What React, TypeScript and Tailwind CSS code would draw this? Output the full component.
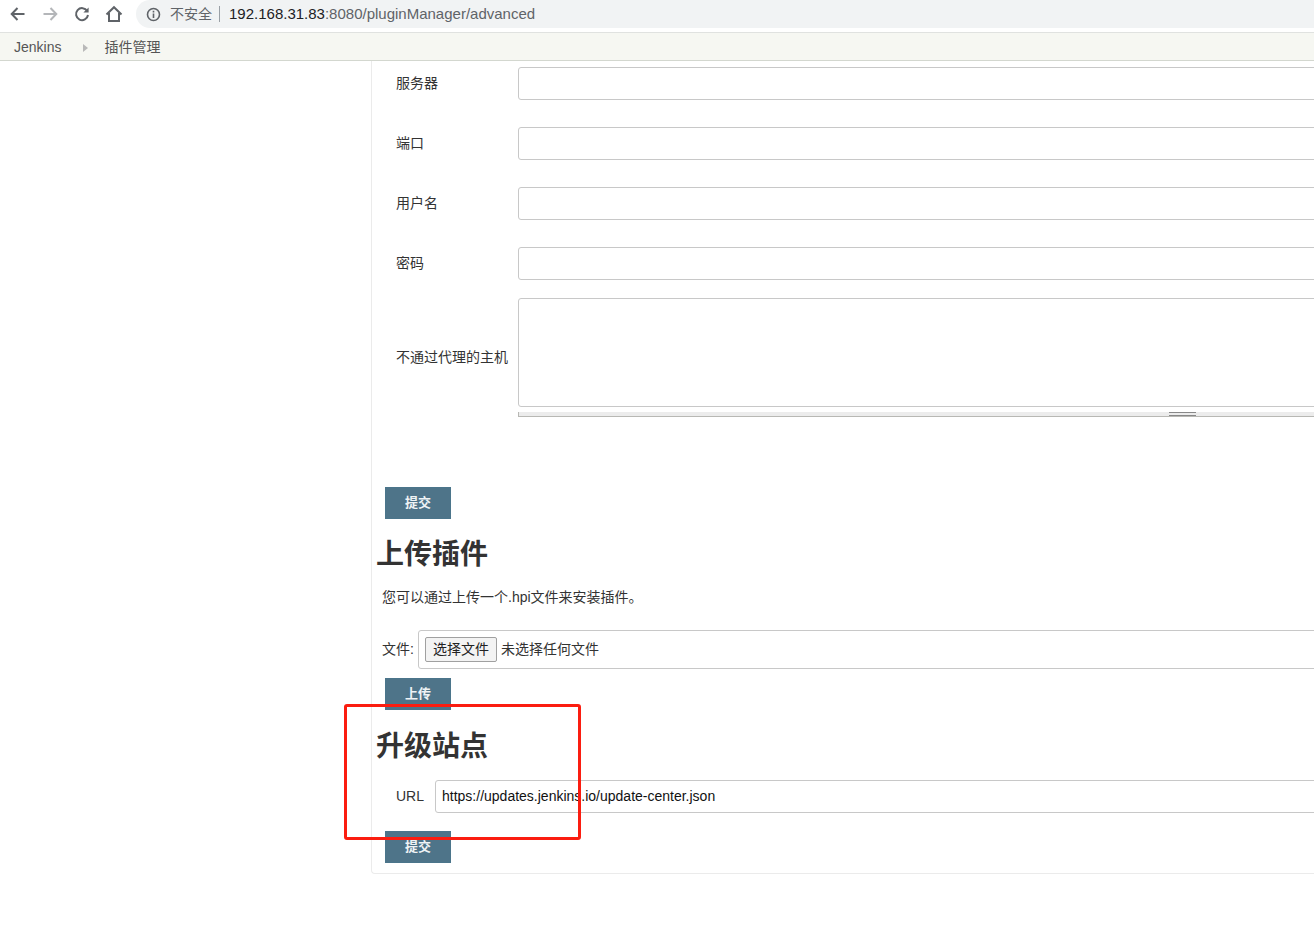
const CJK = "font-['Liberation_Sans','Noto_Sans_CJK_SC',sans-serif]";

const FIELDS = ["服务器", "端口", "用户名", "密码"];

function SubmitButton({ label }: { label: string }) {
  return (
    <button className="flex h-[32px] w-[66px] items-center justify-center border border-[#4b758b] bg-[#4e7489] text-[13px] font-bold text-[#eef3f5]">
      {label}
    </button>
  );
}

function ToolbarIcons() {
  return (
    <div className="flex items-center">
      <svg className="ml-[9px]" width="18" height="18" viewBox="0 0 18 18" fill="none" stroke="#5f6368" strokeWidth="2">
        <path d="M15.5 9H3M8.5 3 2.7 9l5.8 6" />
      </svg>
      <svg className="ml-[14px]" width="18" height="18" viewBox="0 0 18 18" fill="none" stroke="#b4b6b9" strokeWidth="2">
        <path d="M2.5 9H15M9.5 3l5.8 6-5.800 6" />
      </svg>
      <svg className="ml-[14px]" width="18" height="18" viewBox="0 0 18 18" fill="none">
        <path d="M14.2 6A6 6 0 1 0 15 10" stroke="#5f6368" strokeWidth="2" />
        <path d="M15.6 2.4V7.6H10.4Z" fill="#5f6368" />
      </svg>
      <svg className="ml-[14px]" width="18" height="18" viewBox="0 0 18 18" fill="none" stroke="#5f6368" strokeWidth="2">
        <path d="M1.5 9.5 9 2.2l7.500 7.300M4 8v8h10V8" />
      </svg>
    </div>
  );
}

export default function App() {
  return (
    <div className={`relative h-[941px] w-[1314px] overflow-hidden bg-white ${CJK}`}>
      <div className="flex h-[33px] items-start border-b border-[#e0e2e0] bg-white">
        <div className="flex h-[28px] items-center">
          <ToolbarIcons />
        </div>
        <div className="ml-[13px] flex h-[28px] flex-1 items-center rounded-l-[14px] bg-[#f1f3f4] pl-[10px]">
          <svg width="15" height="15" viewBox="0 0 15 15" fill="none" stroke="#5f6368" strokeWidth="1.600">
            <circle cx="7.500" cy="7.500" r="6" />
            <path d="M7.500 6.500v4.500M7.500 3.800v1.600" />
          </svg>
          <span className="ml-[9px] text-[14px] text-[#5f6368]">不安全</span>
          <span className="ml-[7px] h-[16px] w-px bg-[#9aa0a6]" />
          <span className="ml-[9px] text-[15px] text-[#202124]">
            192.168.31.83<span className="text-[#5f6368]">:8080/pluginManager/advanced</span>
          </span>
        </div>
      </div>

      <div className="flex h-[28px] items-center border-b border-[#d3d7cf] bg-[#f6f7f2] pt-[2px] pl-[14px] text-[14px] text-[#555]">
        <span>Jenkins</span>
        <span className="ml-[22px] h-0 w-0 border-y-[4px] border-l-[5px] border-y-transparent border-l-[#b9b9b9]" />
        <span className="ml-[16px]">插件管理</span>
      </div>

      <div className="ml-[371px] h-[813px] w-[1100px] rounded-bl-[4px] border-b border-l border-[#ebebeb] text-[14px] text-[#333]">
        <div className="flex flex-col gap-[27px] pt-[6px]">
          {FIELDS.map((f) => (
            <div key={f} className="flex items-center">
              <span className="w-[146px] pb-[1px] pl-[24px]">{f}</span>
              <div className="h-[33px] w-[900px] rounded-[3px] border border-[#c8c8c8] bg-white" />
            </div>
          ))}
        </div>

        <div className="mt-[18px] flex items-center">
          <span className="w-[146px] pt-[10px] pl-[24px] whitespace-nowrap">不通过代理的主机</span>
          <div className="h-[109px] w-[900px] rounded-[3px] border border-[#c8c8c8] bg-white" />
        </div>
        <div className="mt-[5px] ml-[146px] flex h-[5px] w-[900px] items-start border-b border-l border-[#b8b8b4] bg-[#ececec]">
          <div className="ml-[650px] h-[4px] w-[27px] border-y border-[#888]" />
        </div>

        <div className="mt-[70px] ml-[13px]">
          <SubmitButton label="提交" />
        </div>

        <h2 className="mt-[15px] ml-[4px] text-[28px] leading-[42px] font-bold text-[#333]">上传插件</h2>
        <p className="mt-[11px] ml-[10px] leading-[20px]">您可以通过上传一个.hpi文件来安装插件。</p>

        <div className="mt-[23px] ml-[10px] flex items-center">
          <span className="w-[36px]">文件:</span>
          <div className="flex h-[39px] w-[900px] items-center rounded-[3px] border border-[#c8c8c8] pl-[6px]">
            <span className="flex h-[25px] w-[72px] items-center justify-center rounded-[2px] border border-[#a0a0a0] bg-[#f3f3f3] text-[#222]">
              选择文件
            </span>
            <span className="ml-[4px]">未选择任何文件</span>
          </div>
        </div>

        <div className="mt-[9px] ml-[13px]">
          <SubmitButton label="上传" />
        </div>

        <h2 className="mt-[16px] ml-[4px] text-[28px] leading-[42px] font-bold text-[#333]">升级站点</h2>

        <div className="mt-[12px] flex items-center">
          <span className="w-[63px] pl-[24px]">URL</span>
          <div className="flex h-[33px] w-[900px] items-center rounded-[3px] border border-[#c8c8c8] pl-[6px] text-[#111]">
            https://updates.jenkins.io/update-center.json
          </div>
        </div>

        <div className="mt-[18px] ml-[13px]">
          <SubmitButton label="提交" />
        </div>
      </div>

      <div className="absolute top-[704px] left-[344px] h-[136px] w-[237px] rounded-[3px] border-[3px] border-[#fb1d10]" />
    </div>
  );
}
